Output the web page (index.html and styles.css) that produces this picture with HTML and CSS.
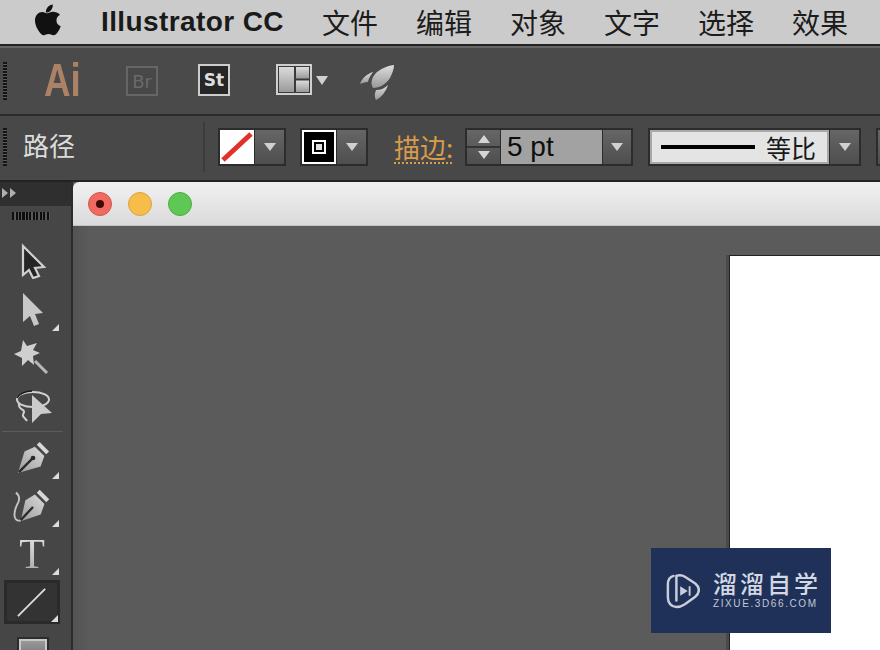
FILE: index.html
```html
<!DOCTYPE html>
<html lang="zh">
<head>
<meta charset="utf-8">
<title>Illustrator CC</title>
<link rel="stylesheet" href="styles.css">
</head>
<body>
<div class="app">
  <header class="menubar">
    <svg class="apple" viewBox="0 0 28 32"><path d="M19.500 0c.2 2.300-.6 4.300-1.900 5.800-1.300 1.500-3.200 2.600-5.200 2.400-.3-2.100.7-4.200 1.900-5.600C15.700 1.100 17.800.1 19.500 0zM26.700 10.800c-2.200 1.400-3.400 3.200-3.400 5.600 0 2.800 1.600 4.900 4.400 6-.8 2.400-1.800 4.400-3.200 6.300-1.300 1.800-2.600 3.100-4.400 3.100-1.900 0-2.700-1.200-5-1.200-2.300 0-3.200 1.200-5 1.200-1.800 0-3.100-1.500-4.500-3.400C3.300 25.500 1 20.800 1 16.500c0-5.800 3.800-8.900 7.600-8.900 2.200 0 3.900 1.400 5.300 1.400 1.300 0 3.300-1.500 5.800-1.500 2.500 0 5.300 1 7 2.800z"/></svg>
    <span class="app-name">Illustrator CC</span>
    <nav class="menu">
      <span>文件</span><span>编辑</span><span>对象</span><span>文字</span><span>选择</span><span>效果</span>
    </nav>
  </header>

  <section class="appbar">
    <div class="grip"></div>
    <span class="ai-logo">Ai</span>
    <span class="app-box br">Br</span>
    <span class="app-box st">St</span>
    <svg class="layout-icon" viewBox="0 0 36 31">
      <defs><linearGradient id="pg" x1="0" y1="0" x2="0" y2="1"><stop offset="0" stop-color="#dcdcdc"/><stop offset="1" stop-color="#9a9a9a"/></linearGradient></defs>
      <rect x="1" y="1" width="34" height="29" fill="#3a3a3a" stroke="#cfcfcf" stroke-width="2"/>
      <rect x="3" y="3" width="15" height="25" fill="url(#pg)"/>
      <rect x="20" y="3" width="13" height="11.500" fill="url(#pg)"/>
      <rect x="20" y="16.500" width="13" height="11.500" fill="url(#pg)"/>
    </svg>
    <span class="arrow arrow-big"></span>
    <svg class="rocket" viewBox="0 0 36 36">
      <defs><linearGradient id="rg" x1="0" y1="0" x2="0" y2="1"><stop offset="0" stop-color="#dedede"/><stop offset="1" stop-color="#989898"/></linearGradient></defs>
      <path d="M34 1C26 2 17 6 13 13 11 17 11 21 13 24 20 24 26 20 30 14 32 10 34 5 34 1z" fill="url(#rg)"/>
      <path d="M0 20C2 14 7 10 13 8 10 12 8 16 8 18 5 18 2 19 0 20z" fill="url(#rg)"/>
      <path d="M16 36C14 32 15 29 16 26 21 26 25 24 28 21 26 27 22 33 16 36z" fill="url(#rg)"/>
    </svg>
  </section>

  <section class="controlbar">
    <div class="grip"></div>
    <span class="path-label">路径</span>
    <div class="divider"></div>
    <div class="swatch-combo">
      <svg class="swatch" viewBox="0 0 34 34"><rect width="34" height="34" fill="#fff"/><path d="M3 30 31 4" stroke="#e0312a" stroke-width="5"/></svg>
      <span class="drop"><span class="arrow"></span></span>
    </div>
    <div class="swatch-combo stroke-combo">
      <svg class="swatch" viewBox="0 0 34 34"><rect x="1" y="1" width="32" height="32" fill="#000" stroke="#fff" stroke-width="2"/><rect x="11" y="11" width="12" height="12" fill="none" stroke="#fff" stroke-width="2"/><rect x="14" y="14" width="6" height="6" fill="#e0e0e0"/></svg>
      <span class="drop"><span class="arrow"></span></span>
    </div>
    <span class="stroke-label">描边:</span>
    <div class="weight">
      <span class="spin"><span class="spin-up"></span><span class="spin-line"></span><span class="spin-down"></span></span>
      <span class="weight-field">5 pt</span>
      <span class="drop weight-drop"><span class="arrow"></span></span>
    </div>
    <div class="profile">
      <span class="profile-field"><span class="stroke-line"></span><span class="profile-text">等比</span></span>
      <span class="drop profile-drop"><span class="arrow"></span></span>
    </div>
    <div class="next-box"></div>
  </section>

  <div class="workspace">
    <aside class="tools">
      <div class="tools-head"><span class="mini"></span><span class="mini"></span></div>
      <div class="tools-grip"></div>
      <div class="tool">
        <svg class="up" viewBox="0 0 32 36"><path d="M6 3 27 24 18 25 22 33 16 35 12 27 6 32z" fill="#262626" stroke="#d0d0d0" stroke-width="2.200"/></svg>
      </div>
      <div class="tool corner">
        <svg class="up" viewBox="0 0 32 36"><path d="M6 2 26 22 18 23 22 33 17 35 13 25 6 31z" fill="#c8c8c8"/></svg>
      </div>
      <div class="tool">
        <svg class="big" viewBox="0 0 38 36"><path d="M9 0 13 6 23 3 19 10 26 13 19 16 20 25 14 20 8 26 8 18 0 14 7 11z" fill="#cfcfcf"/><path d="M21 21 33 33" stroke="#b8b8b8" stroke-width="3"/></svg>
      </div>
      <div class="tool">
        <svg class="big" viewBox="0 0 38 36"><ellipse cx="19" cy="11.500" rx="16" ry="7.500" fill="none" stroke="#d0d0d0" stroke-width="2"/><path d="M18 3C11 3 5 6 3 10" fill="none" stroke="#1c1c1c" stroke-width="1.500"/><path d="M5 15c-1 4 2 6 4 7 3 2-1 4 0 6 1 2 3 3 4 5" fill="none" stroke="#d0d0d0" stroke-width="2"/><path d="M18 7 38 25 27 26 18 35z" fill="#cbcbcb"/></svg>
      </div>
      <div class="tools-sep"></div>
      <div class="tool corner">
        <svg viewBox="0 0 36 38"><defs><linearGradient id="ng" x1="1" y1="0" x2="0" y2="1"><stop offset="0" stop-color="#dadada"/><stop offset="1" stop-color="#9c9c9c"/></linearGradient></defs><path d="M25 2 35 12 32 15 22 5z" fill="#d8d8d8"/><path d="M20 7 30 17 26 28 2 35 9 12z" fill="url(#ng)"/><path d="M3 34 17 20" stroke="#2b2b2b" stroke-width="2.500"/><circle cx="18" cy="19" r="2.500" fill="#2b2b2b"/></svg>
      </div>
      <div class="tool corner">
        <svg class="wide" viewBox="0 0 42 38"><path d="M28 2 38 12 35 15 25 5z" fill="#d8d8d8"/><path d="M23 7 33 17 29 28 8 35 13 13z" fill="url(#ng)"/><path d="M8 34 21 20" stroke="#2b2b2b" stroke-width="2.500"/><path d="M3 5c3 2 4 5 3 9-2 5-6 10-4 17 1 3 4 4 6 3" fill="none" stroke="#c4c4c4" stroke-width="2"/></svg>
      </div>
      <div class="tool corner"><span class="tool-t">T</span></div>
      <div class="tool corner selected">
        <svg viewBox="0 0 32 32"><path d="M1 31 30 2" stroke="#dcdcdc" stroke-width="2"/></svg>
      </div>
      <div class="tool">
        <span class="rect-tool"></span>
      </div>
    </aside>

    <main class="document">
      <div class="titlebar">
        <span class="light red"><span class="dot"></span></span>
        <span class="light yellow"></span>
        <span class="light green"></span>
      </div>
      <div class="canvas">
        <div class="artboard"></div>
      </div>
    </main>
  </div>

  <div class="watermark">
    <svg class="wm-logo" viewBox="0 0 36 38"><path d="M8 3C4 4 2 7 2 12v14c0 6 4 10 9 10 3 0 6-1 9-3l11-8c5-4 5-10 0-14L20 4c-3-2-6-2-9-1v26" fill="none" stroke="#c9ced9" stroke-width="2.600" stroke-linecap="round"/><path d="M15 14 23 19 15 24z" fill="#c9ced9"/><path d="M25 14v10" stroke="#c9ced9" stroke-width="2"/></svg>
    <div class="wm-text">
      <span class="wm-title">溜溜自学</span>
      <span class="wm-url">ZIXUE.3D66.COM</span>
    </div>
  </div>
</div>
</body>
</html>
```
FILE: styles.css
```css
* { box-sizing: border-box; }
html, body { margin: 0; padding: 0; background: #5a5a5a; }
body { width: 880px; height: 650px; overflow: hidden; }
.app {
  position: relative;
  width: 880px;
  height: 650px;
  display: flex;
  flex-direction: column;
  overflow: hidden;
  font-family: "Liberation Sans", "Noto Sans CJK SC", sans-serif;
}

/* menu bar */
.menubar {
  height: 46px;
  flex: none;
  display: flex;
  align-items: center;
  background: #cbcbcb;
  border-bottom: 2px solid #222;
  color: #1c1c1c;
  padding-left: 34px;
  white-space: nowrap;
}
.apple { width: 27px; height: 32px; fill: #111; margin-top: -4px; flex: none; }
.app-name {
  margin-left: 40px;
  font-size: 28px;
  font-weight: 700;
  letter-spacing: 0.4px;
  color: #1a1a1a;
  flex: none;
}
.menu {
  margin-left: 38px;
  display: flex;
  gap: 38px;
  font-family: "Noto Sans CJK SC", sans-serif;
  font-size: 28px;
  line-height: 44px;
}

/* application bar */
.appbar {
  height: 70px;
  flex: none;
  display: flex;
  align-items: center;
  background: #4a4a4a;
  border-top: 2px solid #666;
  border-bottom: 2px solid #2b2b2b;
}
.grip {
  width: 4px;
  height: 38px;
  margin-left: 3px;
  flex: none;
  background: repeating-linear-gradient(to bottom, #151515 0 2px, #5a5a5a 2px 3px);
}
.ai-logo {
  margin: -3px 0 0 37px;
  width: 38px;
  flex: none;
  font-weight: 700;
  font-size: 46px;
  line-height: 46px;
  color: #ac8266;
  white-space: nowrap;
  transform: scaleX(0.8);
  transform-origin: left center;
}
.app-box {
  width: 32px;
  height: 32px;
  flex: none;
  border: 2px solid #666;
  display: flex;
  align-items: center;
  justify-content: center;
  font-size: 18px;
  font-family: "DejaVu Sans", sans-serif;
  color: #6a6a6a;
  background: #484848;
}
.br { margin-left: 44px; height: 30px; }
.st {
  margin: -2px 0 0 40px;
  border-color: #cdcdcd;
  background: #262626;
  color: #dedede;
  font-weight: 700;
  font-size: 17px;
}
.layout-icon { width: 36px; height: 31px; margin: -3px 0 0 46px; flex: none; }
.arrow {
  display: block;
  width: 0;
  height: 0;
  border-left: 6.500px solid transparent;
  border-right: 6.500px solid transparent;
  border-top: 9px solid #d0d0d0;
}
.arrow-big { margin-left: 4px; margin-top: -1px; }
.rocket { width: 36px; height: 36px; margin-left: 32px; margin-top: 2px; flex: none; }

/* control bar */
.controlbar {
  height: 66px;
  flex: none;
  display: flex;
  align-items: center;
  background: #484848;
  border-bottom: 2px solid #222;
  padding-bottom: 2px;
  overflow: hidden;
}
.path-label {
  margin: -6px 0 0 16px;
  width: 52px;
  flex: none;
  white-space: nowrap;
  font-size: 26px;
  font-family: "Noto Sans CJK SC", sans-serif;
  color: #dcdcdc;
}
.divider {
  margin-left: 128px;
  width: 2px;
  height: 50px;
  background: #3c3c3c;
  flex: none;
}
.swatch-combo {
  display: flex;
  width: 68px;
  height: 38px;
  margin-left: 13px;
  background: #2c2c2c;
  padding: 2px;
  gap: 1px;
  flex: none;
}
.stroke-combo { margin-left: 14px; }
.swatch { width: 34px; height: 34px; display: block; flex: none; }
.drop {
  flex: 1;
  display: flex;
  align-items: center;
  justify-content: center;
  background: linear-gradient(#666, #4e4e4e);
}
.drop .arrow { border-left-width: 6px; border-right-width: 6px; border-top-width: 8px; }
.stroke-label {
  margin-left: 26px;
  font-family: "Noto Sans CJK SC", sans-serif;
  font-size: 26px;
  line-height: 31px;
  width: 58px;
  flex: none;
  white-space: nowrap;
  color: #d99b4c;
  border-bottom: 2px dotted #d99b4c;
}
.weight {
  display: flex;
  width: 168px;
  height: 38px;
  margin-left: 13px;
  background: #2c2c2c;
  padding: 2px;
  flex: none;
}
.spin {
  width: 33px;
  flex: none;
  display: flex;
  flex-direction: column;
  align-items: center;
  justify-content: center;
  background: linear-gradient(#666, #4e4e4e);
  margin-right: 1px;
}
.spin-up, .spin-down {
  width: 0;
  height: 0;
  border-left: 6px solid transparent;
  border-right: 6px solid transparent;
}
.spin-up { border-bottom: 8px solid #d4d4d4; }
.spin-down { border-top: 8px solid #d4d4d4; }
.spin-line { width: 100%; height: 2px; background: #333; margin: 3px 0; }
.weight-field {
  width: 101px;
  flex: none;
  background: #a2a2a2;
  color: #0e0e0e;
  font-size: 28px;
  line-height: 34px;
  padding-left: 6px;
  margin-right: 1px;
}
.profile {
  display: flex;
  width: 213px;
  height: 38px;
  margin-left: 15px;
  background: #2c2c2c;
  padding: 2px;
  flex: none;
}
.profile-field {
  width: 179px;
  flex: none;
  display: flex;
  align-items: center;
  background: #e4e4e4;
  border: 2px solid #a8a8a8;
  padding-left: 9px;
}
.stroke-line { width: 94px; height: 4px; background: #000; flex: none; }
.profile-text {
  margin-left: 11px;
  font-family: "Noto Sans CJK SC", sans-serif;
  font-size: 25px;
  color: #1a1a1a;
  white-space: nowrap;
}
.profile-drop { margin-left: 1px; }
.next-box {
  width: 10px;
  height: 38px;
  margin-left: 15px;
  background: linear-gradient(#666, #4e4e4e);
  border: 2px solid #2c2c2c;
  border-right: 0;
  flex: none;
}

/* workspace */
.workspace { flex: 1; display: flex; min-height: 0; }
.tools {
  width: 73px;
  flex: none;
  background: #464646;
  border-right: 2px solid #2b2b2b;
  display: flex;
  flex-direction: column;
  align-items: stretch;
}
.tools-head {
  height: 24px;
  flex: none;
  background: #2f2f2f;
  display: flex;
  align-items: center;
  gap: 2px;
  padding: 0 0 2px 2px;
}
.mini {
  width: 0;
  height: 0;
  border-top: 5px solid transparent;
  border-bottom: 5px solid transparent;
  border-left: 6px solid #b0b0b0;
}
.tools-grip {
  width: 38px;
  height: 8px;
  margin: 6px 0 18px 12px;
  flex: none;
  background: repeating-linear-gradient(to right, #0e0e0e 0 2px, #585858 2px 3.500px);
}
.tool {
  position: relative;
  height: 48px;
  flex: none;
  display: flex;
  align-items: center;
  justify-content: center;
  padding-right: 5px;
}
.tool svg { width: 34px; height: 36px; display: block; }
.tool svg.up { margin-top: -3px; }
.tool svg.big { width: 38px; height: 36px; }
.tool svg.wide { width: 40px; height: 38px; }
.corner::after {
  content: "";
  position: absolute;
  right: 12px;
  bottom: 3px;
  width: 0;
  height: 0;
  border-left: 7px solid transparent;
  border-bottom: 7px solid #dcdcdc;
}
.tools-sep {
  height: 1px;
  margin: 1px 8px 2px 2px;
  background: #5c5c5c;
  flex: none;
}
.tool-t {
  font-family: "Liberation Serif", serif;
  font-size: 42px;
  line-height: 42px;
  margin-left: -2px;
  color: transparent;
  background: linear-gradient(#e4e4e4, #a8a8a8);
  -webkit-background-clip: text;
  background-clip: text;
}
.selected {
  height: 44px;
  width: 56px;
  margin: 2px 0 2px 4px;
  padding-right: 0;
  background: #333;
  border: 3px solid #2a2a2a;
}
.selected.corner::after { right: -1px; bottom: -1px; }
.selected svg { width: 30px; height: 30px; }
.rect-tool {
  width: 28px;
  height: 28px;
  margin-top: 6px;
  border: 2px solid #c8c8c8;
  outline: 2px solid #2c2c2c;
  background: linear-gradient(#999, #666);
}

/* document */
.document { flex: 1; display: flex; flex-direction: column; min-width: 0; }
.titlebar {
  height: 44px;
  flex: none;
  display: flex;
  align-items: center;
  gap: 16px;
  padding: 0 0 0 15px;
  background: linear-gradient(#f1f1f1, #dadada);
  border-bottom: 1px solid #c4c4c4;
  border-top-left-radius: 6px;
}
.light {
  width: 24px;
  height: 24px;
  border-radius: 50%;
  display: flex;
  align-items: center;
  justify-content: center;
  flex: none;
}
.red { background: #f06a62; border: 1px solid #d9524c; }
.yellow { background: #f6bd4b; border: 1px solid #dca33c; }
.green { background: #5fc854; border: 1px solid #4dab45; }
.dot { width: 8px; height: 8px; border-radius: 50%; background: #3f0a08; }
.canvas {
  flex: 1;
  min-height: 0;
  overflow: hidden;
  background: linear-gradient(to right, #535353 0, #5b5b5b 16px);
  padding: 29px 0 0 656px;
}
.artboard {
  height: 420px;
  background: #fff;
  border-top: 1px solid #222;
  border-left: 1px solid #222;
  box-shadow: -3px 0 0 #4a4a4a;
}

/* watermark */
.watermark {
  position: absolute;
  left: 651px;
  top: 548px;
  width: 180px;
  height: 85px;
  background: #1f3159;
  display: flex;
  align-items: center;
  padding: 0 0 0 15px;
}
.wm-logo { width: 34px; height: 36px; flex: none; }
.wm-text { margin-left: 13px; display: flex; flex-direction: column; margin-top: -4px; }
.wm-title {
  font-family: "Noto Sans CJK SC", sans-serif;
  font-size: 24px;
  line-height: 30px;
  letter-spacing: 3px;
  font-weight: 500;
  color: #d4d8e2;
  white-space: nowrap;
}
.wm-url {
  font-size: 10px;
  line-height: 12px;
  letter-spacing: 1.600px;
  color: #c2c8d6;
  white-space: nowrap;
}
```
